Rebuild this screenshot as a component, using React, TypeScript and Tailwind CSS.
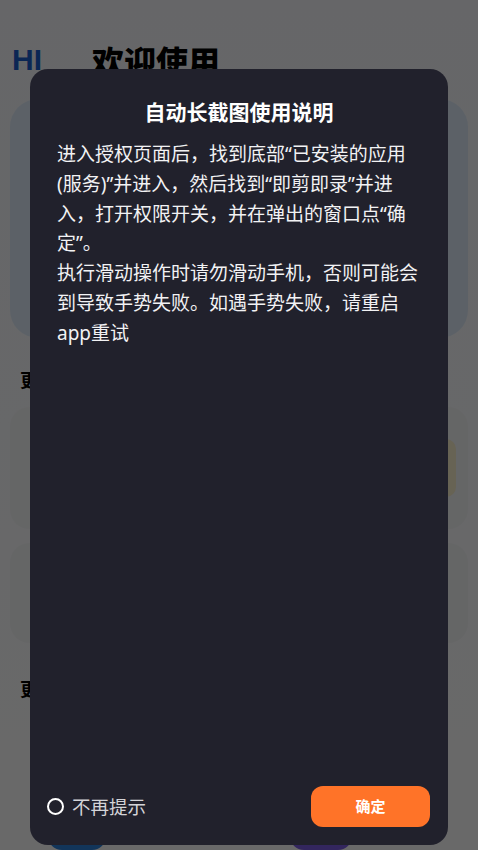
import React from "react";

export default function App() {
  const font = { fontFamily: '"Noto Sans CJK SC", "Noto Sans", sans-serif' };
  const body = { fontFamily: '"Noto Sans", "Noto Sans CJK SC", sans-serif' };
  return (
    <div className="relative w-[478px] h-[850px] overflow-hidden bg-[#f6f7f9]" style={font}>
      {/* underlying page */}
      <div className="flex flex-col h-full bg-gradient-to-b from-[#f2f4f8] to-[#fafafa]">
        <div className="flex items-center h-[50px] mt-[36px] px-[12px] gap-[50px]">
          <span className="text-[30px] font-black text-[#1c5cc8] leading-none" style={{ fontFamily: '"Liberation Sans", sans-serif' }}>HI</span>
          <span className="text-[32px] font-black text-black leading-none">欢迎使用</span>
        </div>
        <div className="mx-[10px] mt-[14px] h-[245px] rounded-[28px] bg-[#dbe8f6]" />
        <div className="px-[20px] mt-[28px] text-[18px] font-bold text-black">更多功能</div>
        <div className="grid grid-cols-2 gap-[14px] px-[10px] mt-[14px]">
          <div className="h-[122px] rounded-[20px] bg-[#f1f2f4]" />
          <div className="h-[122px] rounded-[20px] bg-[#f1f2f4] flex items-center justify-end pr-[12px]">
            <div className="w-[30px] h-[58px] rounded-[10px] bg-[#f5ecc8]" />
          </div>
          <div className="h-[100px] rounded-[20px] bg-[#f1f2f4]" />
          <div className="h-[100px] rounded-[20px] bg-[#f1f2f4]" />
        </div>
        <div className="px-[20px] mt-[32px] text-[18px] font-bold text-black">更多工具</div>
        <div className="flex justify-between px-[48px] mt-[118px]">
          <div className="w-[58px] h-[30px] rounded-[14px] bg-[#2d7fd6]" />
          <div className="w-[62px] h-[30px] rounded-[14px] bg-[#7b5ce0] mr-[78px]" />
        </div>
      </div>

      {/* overlay */}
      <div className="absolute inset-0 bg-black/[0.58]" />

      {/* dialog */}
      <div className="absolute left-[30px] top-[69px] w-[418px] h-[776px] rounded-[18px] bg-[#21212c] flex flex-col">
        <div className="pt-[27px] text-center text-[21px] font-bold text-white leading-[30px]">
          自动长截图使用说明
        </div>
        <div className="px-[27px] mt-[14px] text-[19px] text-[#f2f2f4] leading-[29.8px] flex-1 whitespace-nowrap" style={body}>
          <div>进入授权页面后，找到底部“已安装的应用</div>
          <div>(服务)”并进入，然后找到“即剪即录”并进</div>
          <div>入，打开权限开关，并在弹出的窗口点“确</div>
          <div>定”。</div>
          <div>执行滑动操作时请勿滑动手机，否则可能会</div>
          <div>到导致手势失败。如遇手势失败，请重启</div>
          <div>app重试</div>
        </div>
        <div className="flex items-center justify-between pl-[17px] pr-[18px] pb-[18px]">
          <div className="flex items-center gap-[8px]">
            <div className="w-[17px] h-[17px] rounded-full border-[2px] border-white" />
            <span className="text-[18.5px] text-[#d4d4d8] leading-none">不再提示</span>
          </div>
          <button className="w-[119px] h-[41px] rounded-[12px] bg-[#ff7328] text-white text-[15px] font-bold">
            确定
          </button>
        </div>
      </div>
    </div>
  );
}
